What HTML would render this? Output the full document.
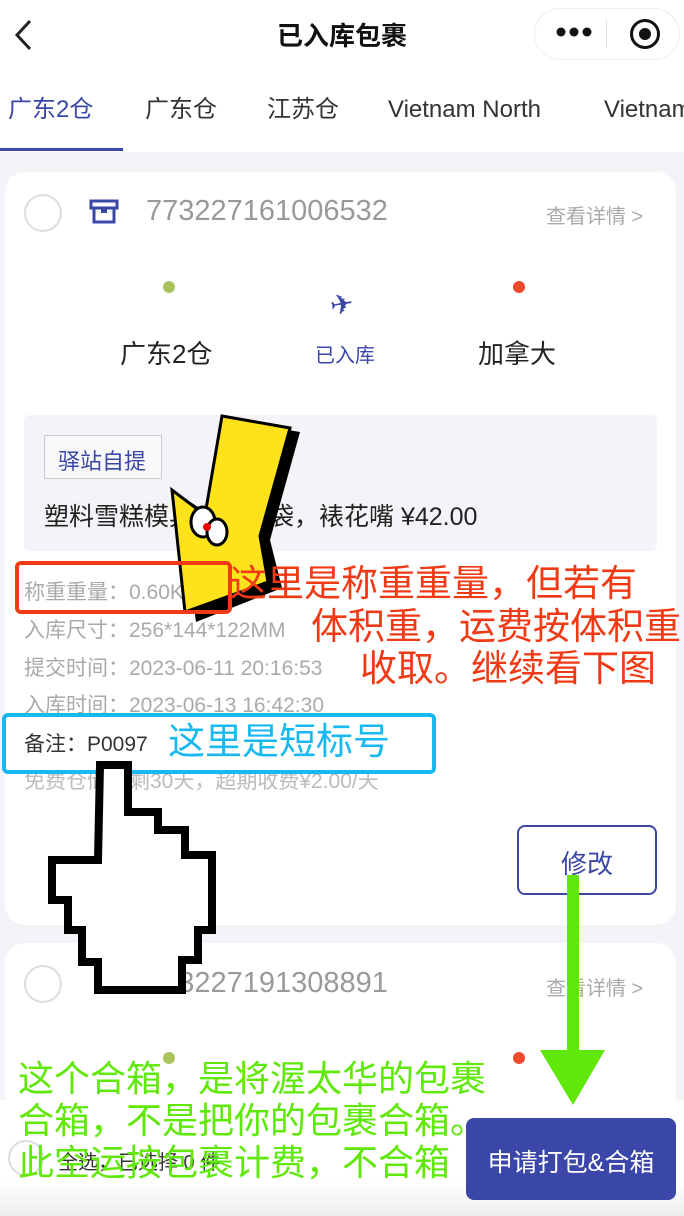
<!DOCTYPE html>
<html><head><meta charset="utf-8"><style>
*{margin:0;padding:0;box-sizing:border-box}
body{width:684px;height:1216px;overflow:hidden;background:#f4f3f7;font-family:"Liberation Sans","Noto Sans CJK SC",sans-serif;position:relative}
.a{position:absolute;white-space:nowrap}
.g{color:#aaa;font-size:21px}
.t{top:92px;font-size:24px;line-height:36px;color:#333}
</style></head><body>
<div class="a" style="left:0;top:0;width:684px;height:152px;background:#fff"></div>
<svg class="a" style="left:12px;top:18px" width="24" height="34"><path d="M18 3 L5 17 L18 31" stroke="#222" stroke-width="3" fill="none"/></svg>
<div class="a" style="left:0;width:684px;top:16px;text-align:center;font-size:26px;font-weight:bold;color:#111">已入库包裹</div>
<div class="a" style="left:534px;top:8px;width:146px;height:52px;border:1px solid #eee;border-radius:26px;background:#fff"></div>
<svg class="a" style="left:556px;top:26px" width="36" height="12"><circle cx="5" cy="6" r="4.5" fill="#111"/><circle cx="18" cy="6" r="4.5" fill="#111"/><circle cx="31" cy="6" r="4.5" fill="#111"/></svg>
<div class="a" style="left:606px;top:20px;width:1px;height:28px;background:#ddd"></div>
<div class="a" style="left:630px;top:19px;width:30px;height:30px;border:3px solid #111;border-radius:50%"></div>
<div class="a" style="left:639px;top:28px;width:12px;height:12px;background:#111;border-radius:50%"></div>
<div class="a t" style="left:8px;color:#3b47a6">广东2仓</div>
<div class="a" style="left:0;top:148px;width:123px;height:3px;background:#3b47a6"></div>
<div class="a t" style="left:145px">广东仓</div>
<div class="a t" style="left:267px">江苏仓</div>
<div class="a t" style="left:388px">Vietnam North</div>
<div class="a t" style="left:604px">Vietnam</div>

<div class="a" style="left:5px;top:172px;width:671px;height:753px;background:#fff;border-radius:20px"></div>
<div class="a" style="left:24px;top:194px;width:38px;height:38px;border:2px solid #ddd;border-radius:50%"></div>
<svg class="a" style="left:88px;top:198px" width="32" height="28"><rect x="3" y="3" width="26" height="7" fill="none" stroke="#3b47a6" stroke-width="3"/><rect x="6" y="10" width="20" height="14" fill="none" stroke="#3b47a6" stroke-width="3"/><rect x="13" y="9" width="6" height="6" fill="#3b47a6"/></svg>
<div class="a" style="left:146px;top:195px;font-size:29px;color:#999">773227161006532</div>
<div class="a" style="left:546px;top:200px;font-size:20px;color:#aaa">查看详情 &gt;</div>
<div class="a" style="left:163px;top:281px;width:12px;height:12px;background:#a9c45a;border-radius:50%"></div>
<div class="a" style="left:513px;top:281px;width:12px;height:12px;background:#ee4a2e;border-radius:50%"></div>
<div class="a" style="left:330px;top:288px;font-size:28px;color:#3b47a6;transform:rotate(-10deg)">✈</div>
<div class="a" style="left:120px;top:334px;font-size:26px;color:#222">广东2仓</div>
<div class="a" style="left:315px;top:339px;font-size:20px;color:#3b47a6">已入库</div>
<div class="a" style="left:478px;top:334px;font-size:26px;color:#222">加拿大</div>
<div class="a" style="left:24px;top:415px;width:633px;height:136px;background:#f4f3f7;border-radius:6px"></div>
<div class="a" style="left:44px;top:435px;width:118px;height:44px;border:1px solid #ccc;background:#f8f8fa;font-size:22px;color:#3b47a6;padding:8px 0 0 13px">驿站自提</div>
<div class="a" style="left:44px;top:497px;font-size:25px;color:#222">塑料雪糕模具，裱花袋，裱花嘴 ¥42.00</div>
<div class="a g" style="left:24px;top:576px">称重重量：0.60KG</div>
<div class="a g" style="left:24px;top:614px">入库尺寸：256*144*122MM</div>
<div class="a g" style="left:24px;top:652px">提交时间：2023-06-11 20:16:53</div>
<div class="a g" style="left:24px;top:689px">入库时间：2023-06-13 16:42:30</div>
<div class="a" style="left:24px;top:728px;font-size:21px;color:#333">备注：P0097</div>
<div class="a g" style="left:24px;top:765px;color:#bbb">免费仓储还剩30天，超期收费¥2.00/天</div>
<div class="a" style="left:517px;top:825px;width:140px;height:70px;border:2px solid #3b47a6;border-radius:8px;font-size:26px;color:#3b47a6;text-align:center;padding-top:17px">修改</div>

<div class="a" style="left:5px;top:943px;width:671px;height:200px;background:#fff;border-radius:20px"></div>
<div class="a" style="left:24px;top:965px;width:38px;height:38px;border:2px solid #ddd;border-radius:50%"></div>
<div class="a" style="left:146px;top:967px;font-size:29px;color:#999">773227191308891</div>
<div class="a" style="left:546px;top:972px;font-size:20px;color:#aaa">查看详情 &gt;</div>
<div class="a" style="left:163px;top:1052px;width:12px;height:12px;background:#a9c45a;border-radius:50%"></div>
<div class="a" style="left:513px;top:1052px;width:12px;height:12px;background:#ee4a2e;border-radius:50%"></div>

<div class="a" style="left:0;top:1100px;width:684px;height:116px;background:linear-gradient(#fff 70%,#eee)"></div>
<div class="a" style="left:8px;top:1140px;width:36px;height:36px;border:2px solid #ddd;border-radius:50%"></div>
<div class="a" style="left:58px;top:1146px;font-size:20px;color:#333">全选，已选择 0 件</div>
<div class="a" style="left:466px;top:1118px;width:210px;height:82px;background:#3a47a8;border-radius:8px;color:#fff;font-size:25px;text-align:center;padding-top:25px">申请打包&amp;合箱</div>

<svg class="a" style="left:0;top:0" width="684" height="1216">
<polygon points="230,420 300,432 270,540 282,588 196,622 178,494 212,516" fill="#000"/>
<polygon points="222,416 290,428 260,536 268,582 185,612 172,490 205,515" fill="#fde21c" stroke="#000" stroke-width="3"/>
<ellipse cx="203" cy="522" rx="12" ry="15" fill="#fff" stroke="#000" stroke-width="3"/>
<ellipse cx="217" cy="532" rx="10" ry="13" fill="#fff" stroke="#000" stroke-width="3"/>
<circle cx="207" cy="527" r="4" fill="#e00"/>
<rect x="17" y="563" width="213" height="49" rx="4" fill="none" stroke="#f03a16" stroke-width="4"/>
<rect x="4" y="715" width="430" height="57" rx="4" fill="none" stroke="#18b8f0" stroke-width="4"/>
<polygon points="100,765 128,765 128,812 158,812 158,830 185,830 185,855 212,855 212,930 198,930 198,960 182,960 182,990 98,990 98,962 82,962 82,930 68,930 68,900 52,900 52,860 98,860" fill="#fff" stroke="#000" stroke-width="8"/>
<rect x="567" y="875" width="12" height="180" fill="#5fe80a"/>
<polygon points="540,1050 605,1050 573,1105" fill="#5fe80a"/>
</svg>
<div class="a" style="left:230px;top:563px;font-size:37px;line-height:42px;color:#f03a16">这里是称重重量，但若有</div>
<div class="a" style="left:311px;top:606px;font-size:37px;line-height:42px;color:#f03a16">体积重，运费按体积重</div>
<div class="a" style="left:360px;top:648px;font-size:37px;line-height:42px;color:#f03a16">收取。继续看下图</div>
<div class="a" style="left:168px;top:721px;font-size:37px;line-height:42px;color:#18b8f0">这里是短标号</div>
<div class="a" style="left:18px;top:1058px;font-size:36px;color:#5fe80a;line-height:42px">这个合箱，是将渥太华的包裹<br>合箱，不是把你的包裹合箱。<br>此空运按包裹计费，不合箱</div>
</body></html>
